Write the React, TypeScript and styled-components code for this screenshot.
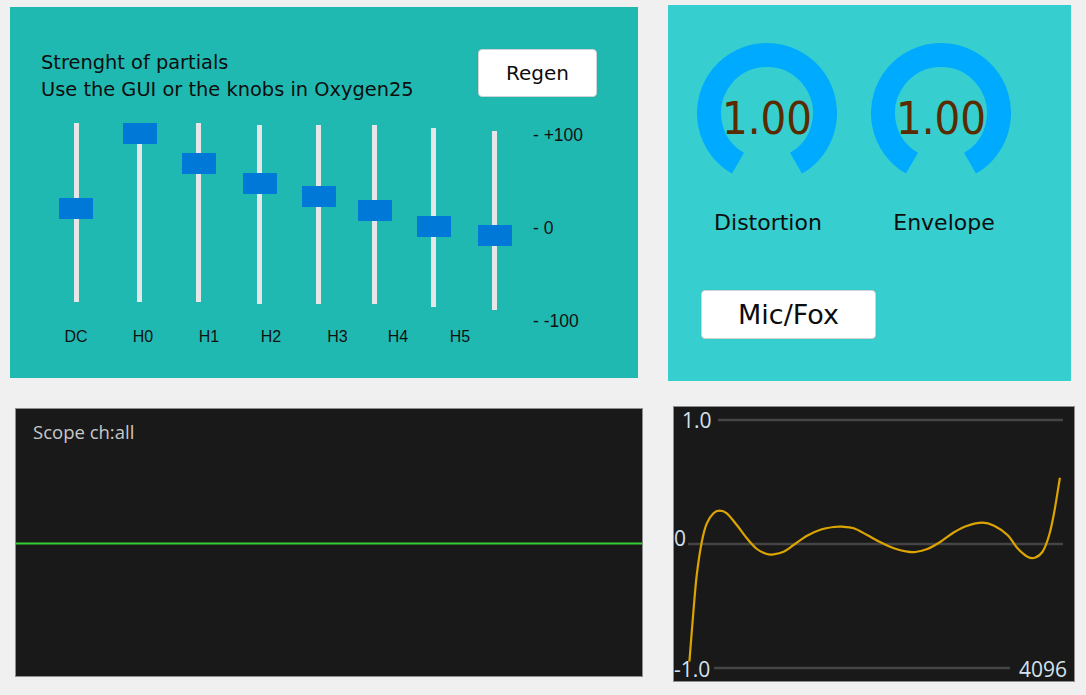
import React from "react";
import styled, { createGlobalStyle } from "styled-components";

const GlobalStyle = createGlobalStyle`
  html, body {
    margin: 0;
    padding: 0;
    background: #f0f0f0;
    width: 1086px;
    height: 695px;
    overflow: hidden;
  }
  * { box-sizing: border-box; }
`;

const Page = styled.div`
  display: grid;
  grid-template-columns: 658px 428px;
  grid-template-rows: 393px 302px;
  width: 1086px;
  height: 695px;
  background: #f0f0f0;
`;

const Panel = styled.div<{ $mt: number; $ml: number; $w: number; $h: number }>`
  margin-top: ${(p) => p.$mt}px;
  margin-left: ${(p) => p.$ml}px;
  width: ${(p) => p.$w}px;
  height: ${(p) => p.$h}px;
`;

const PartialsPanel = styled(Panel)`
  background: #20b9b2;
  padding: 42px 41px 0 31px;
  display: flex;
  flex-direction: column;
`;

const HeaderRow = styled.div`
  display: flex;
  align-items: flex-start;
`;

const HeaderText = styled.div`
  font-family: "DejaVu Sans", sans-serif;
  font-size: 19.4px;
  line-height: 27px;
  color: #0d0d0d;
`;

const WhiteButton = styled.button<{ $w: number; $h: number; $fs: number }>`
  width: ${(p) => p.$w}px;
  height: ${(p) => p.$h}px;
  background: #ffffff;
  border: 1px solid #cfd4d4;
  border-radius: 4px;
  font-family: "DejaVu Sans", sans-serif;
  font-size: ${(p) => p.$fs}px;
  color: #0d0d0d;
  padding: 0;
  display: flex;
  align-items: center;
  justify-content: center;
  box-shadow: 0 0 1px rgba(0, 0, 0, 0.15);
`;

const RegenButton = styled(WhiteButton)`
  margin-left: auto;
`;

const BodyRow = styled.div`
  display: flex;
  margin-top: 20px;
`;

const SliderArea = styled.div`
  display: flex;
  flex-direction: column;
`;

const SliderRow = styled.div`
  display: flex;
  align-items: flex-start;
  height: 187px;
`;

const SliderColumn = styled.div<{ $ml: number; $mt: number }>`
  position: relative;
  width: 34px;
  height: 179px;
  margin-left: ${(p) => p.$ml}px;
  margin-top: ${(p) => p.$mt}px;
  display: flex;
  justify-content: center;
`;

const Track = styled.div`
  width: 5px;
  height: 100%;
  background: #e6e6e6;
`;

const Handle = styled.div<{ $top: number }>`
  position: absolute;
  left: 0;
  top: ${(p) => p.$top}px;
  width: 34px;
  height: 21px;
  background: #0078d7;
`;

const LabelRow = styled.div`
  display: flex;
  margin-top: 17px;
`;

const ChannelLabel = styled.div<{ $ml: number }>`
  width: 40px;
  margin-left: ${(p) => p.$ml}px;
  text-align: center;
  font-family: "Liberation Sans", Arial, sans-serif;
  font-size: 16px;
  line-height: 20px;
  color: #111;
`;

const ScaleColumn = styled.div`
  display: flex;
  flex-direction: column;
  gap: 73px;
  margin-left: 21px;
  padding-top: 2px;
`;

const ScaleLabel = styled.div`
  font-family: "Liberation Sans", Arial, sans-serif;
  font-size: 17.5px;
  line-height: 20px;
  color: #111;
  white-space: pre;
`;

const FxPanel = styled(Panel)`
  background: #36cece;
  padding: 38px 0 0 29px;
  display: flex;
  flex-direction: column;
  align-items: flex-start;
`;

const KnobRow = styled.div`
  display: flex;
  gap: 34px;
`;

const KnobColumn = styled.div`
  display: flex;
  flex-direction: column;
  align-items: center;
  width: 140px;
`;

const KnobFace = styled.div`
  display: grid;
  width: 140px;
  height: 140px;
  & > * {
    grid-area: 1 / 1;
  }
`;

const KnobValue = styled.div`
  display: flex;
  align-items: center;
  justify-content: center;
  padding-top: 10px;
  font-family: "DejaVu Sans Condensed", "DejaVu Sans", sans-serif;
  font-stretch: condensed;
  font-size: 45px;
  color: #5a2a00;
`;

const KnobLabel = styled.div<{ $shift: number }>`
  margin-top: 27px;
  margin-left: ${(p) => p.$shift * 2}px;
  font-family: "DejaVu Sans", sans-serif;
  font-size: 22px;
  line-height: 26px;
  color: #0d0d0d;
  white-space: nowrap;
`;

const MicButton = styled(WhiteButton)`
  margin-top: 54px;
  margin-left: 4px;
`;

const DarkPanel = styled(Panel)`
  position: relative;
  background: #191919;
  border: 1px solid #8e8e8e;
`;

const ScopeLabel = styled.div`
  position: relative;
  padding: 11px 0 0 17px;
  font-family: "Open Sans", sans-serif;
  font-size: 18.5px;
  line-height: 24px;
  color: #c8c8c8;
`;

const Overlay = styled.svg`
  position: absolute;
  left: 0;
  top: 0;
  width: 100%;
  height: 100%;
  display: block;
`;

const AxisLabel = styled.span<{ $left?: number; $right?: number; $top: number }>`
  position: absolute;
  top: ${(p) => p.$top}px;
  ${(p) => (p.$left !== undefined ? `left: ${p.$left}px;` : "")}
  ${(p) => (p.$right !== undefined ? `right: ${p.$right}px;` : "")}
  font-family: "Open Sans", sans-serif;
  font-size: 21px;
  line-height: 24px;
  color: #d4e2ee;
`;

const sliders = [
  { ml: 18.4, mt: 0, handle: 75 },
  { ml: 29.4, mt: 0, handle: 0 },
  { ml: 25.2, mt: 0, handle: 30 },
  { ml: 27, mt: 2, handle: 48 },
  { ml: 25, mt: 2, handle: 61 },
  { ml: 21.7, mt: 2, handle: 75 },
  { ml: 25.3, mt: 5, handle: 88 },
  { ml: 27, mt: 8, handle: 94 },
];

const labels = [
  { text: "DC", ml: 15 },
  { text: "H0", ml: 27 },
  { text: "H1", ml: 26 },
  { text: "H2", ml: 22 },
  { text: "H3", ml: 26.5 },
  { text: "H4", ml: 20.5 },
  { text: "H5", ml: 22 },
];

const curvePoints: [number, number][] = [
  [16.4, 255.7], [20.4, 205.7], [23.75, 169], [28.8, 135.7], [33.8, 117.3],
  [40.5, 107.3], [46.5, 104.7], [53.8, 107.3], [63.8, 119], [73.9, 132.3],
  [83.9, 143], [93.9, 148], [100.6, 148.3], [110.6, 145.7], [120.6, 139],
  [134, 129.7], [147.4, 123.7], [160.7, 121], [169.1, 120.7], [180.8, 122.3],
  [194.1, 129], [207.5, 136.3], [220.9, 142.3], [234.2, 145.7], [242.6, 146],
  [254.3, 143], [267.6, 135.7], [281, 126.3], [294.4, 119.7], [309.4, 116.7],
  [321.1, 119.7], [334.5, 129], [344.5, 142.3], [354.5, 150.7], [361.9, 151.7],
  [369.6, 145.7], [376.2, 129], [381.3, 105.7], [386.9, 71.7],
];

function splinePath(pts: [number, number][]): string {
  const p = pts.map(([x, y]) => [x - 1, y - 1]);
  let d = `M ${p[0][0]} ${p[0][1]}`;
  for (let i = 0; i < p.length - 1; i++) {
    const p0 = p[i - 1] || p[i];
    const p1 = p[i];
    const p2 = p[i + 1];
    const p3 = p[i + 2] || p2;
    const c1x = p1[0] + (p2[0] - p0[0]) / 6;
    const c1y = p1[1] + (p2[1] - p0[1]) / 6;
    const c2x = p2[0] - (p3[0] - p1[0]) / 6;
    const c2y = p2[1] - (p3[1] - p1[1]) / 6;
    d += ` C ${c1x.toFixed(2)} ${c1y.toFixed(2)} ${c2x.toFixed(2)} ${c2y.toFixed(2)} ${p2[0]} ${p2[1]}`;
  }
  return d;
}

const Knob: React.FC<{ value: string }> = ({ value }) => (
  <KnobFace>
    <svg width="140" height="140" viewBox="0 0 140 140">
      <path
        d="M 41 120.23 A 58 58 0 1 1 99 120.23"
        fill="none"
        stroke="#00aaff"
        strokeWidth="24"
      />
    </svg>
    <KnobValue>{value}</KnobValue>
  </KnobFace>
);

export default function App() {
  const curve = splinePath(curvePoints);
  return (
    <>
      <GlobalStyle />
      <Page>
        <PartialsPanel $mt={7} $ml={10} $w={628} $h={371}>
          <HeaderRow>
            <HeaderText>
              Strenght of partials
              <br />
              Use the GUI or the knobs in Oxygen25
            </HeaderText>
            <RegenButton $w={119} $h={48} $fs={20}>
              Regen
            </RegenButton>
          </HeaderRow>
          <BodyRow>
            <SliderArea>
              <SliderRow>
                {sliders.map((s, i) => (
                  <SliderColumn key={i} $ml={s.ml} $mt={s.mt}>
                    <Track />
                    <Handle $top={s.handle} />
                  </SliderColumn>
                ))}
              </SliderRow>
              <LabelRow>
                {labels.map((l) => (
                  <ChannelLabel key={l.text} $ml={l.ml}>
                    {l.text}
                  </ChannelLabel>
                ))}
              </LabelRow>
            </SliderArea>
            <ScaleColumn>
              <ScaleLabel>- +100</ScaleLabel>
              <ScaleLabel>- 0</ScaleLabel>
              <ScaleLabel>- -100</ScaleLabel>
            </ScaleColumn>
          </BodyRow>
        </PartialsPanel>

        <FxPanel $mt={5} $ml={10} $w={403} $h={376}>
          <KnobRow>
            <KnobColumn>
              <Knob value="1.00" />
              <KnobLabel $shift={1}>Distortion</KnobLabel>
            </KnobColumn>
            <KnobColumn>
              <Knob value="1.00" />
              <KnobLabel $shift={3}>Envelope</KnobLabel>
            </KnobColumn>
          </KnobRow>
          <MicButton $w={175} $h={49} $fs={27}>
            Mic/Fox
          </MicButton>
        </FxPanel>

        <DarkPanel $mt={15} $ml={15} $w={628} $h={269}>
          <Overlay viewBox="0 0 626 267" preserveAspectRatio="none">
            <line x1="0" y1="134.5" x2="626" y2="134.5" stroke="#35cf35" strokeWidth="2" />
          </Overlay>
          <ScopeLabel>Scope ch:all</ScopeLabel>
        </DarkPanel>

        <DarkPanel $mt={13} $ml={15} $w={402} $h={276}>
          <Overlay viewBox="0 0 400 274">
            <line x1="44" y1="13" x2="389" y2="13" stroke="#454545" strokeWidth="2.5" />
            <line x1="14" y1="137" x2="389" y2="137" stroke="#454545" strokeWidth="2.5" />
            <line x1="40" y1="261" x2="336" y2="261" stroke="#454545" strokeWidth="2.5" />
            <path d={curve} fill="none" stroke="#dba400" strokeWidth="2.2" strokeLinejoin="round" />
          </Overlay>
          <AxisLabel $left={8} $top={1}>1.0</AxisLabel>
          <AxisLabel $left={0} $top={119}>0</AxisLabel>
          <AxisLabel $left={0} $top={250}>-1.0</AxisLabel>
          <AxisLabel $right={7} $top={250}>4096</AxisLabel>
        </DarkPanel>
      </Page>
    </>
  );
}
